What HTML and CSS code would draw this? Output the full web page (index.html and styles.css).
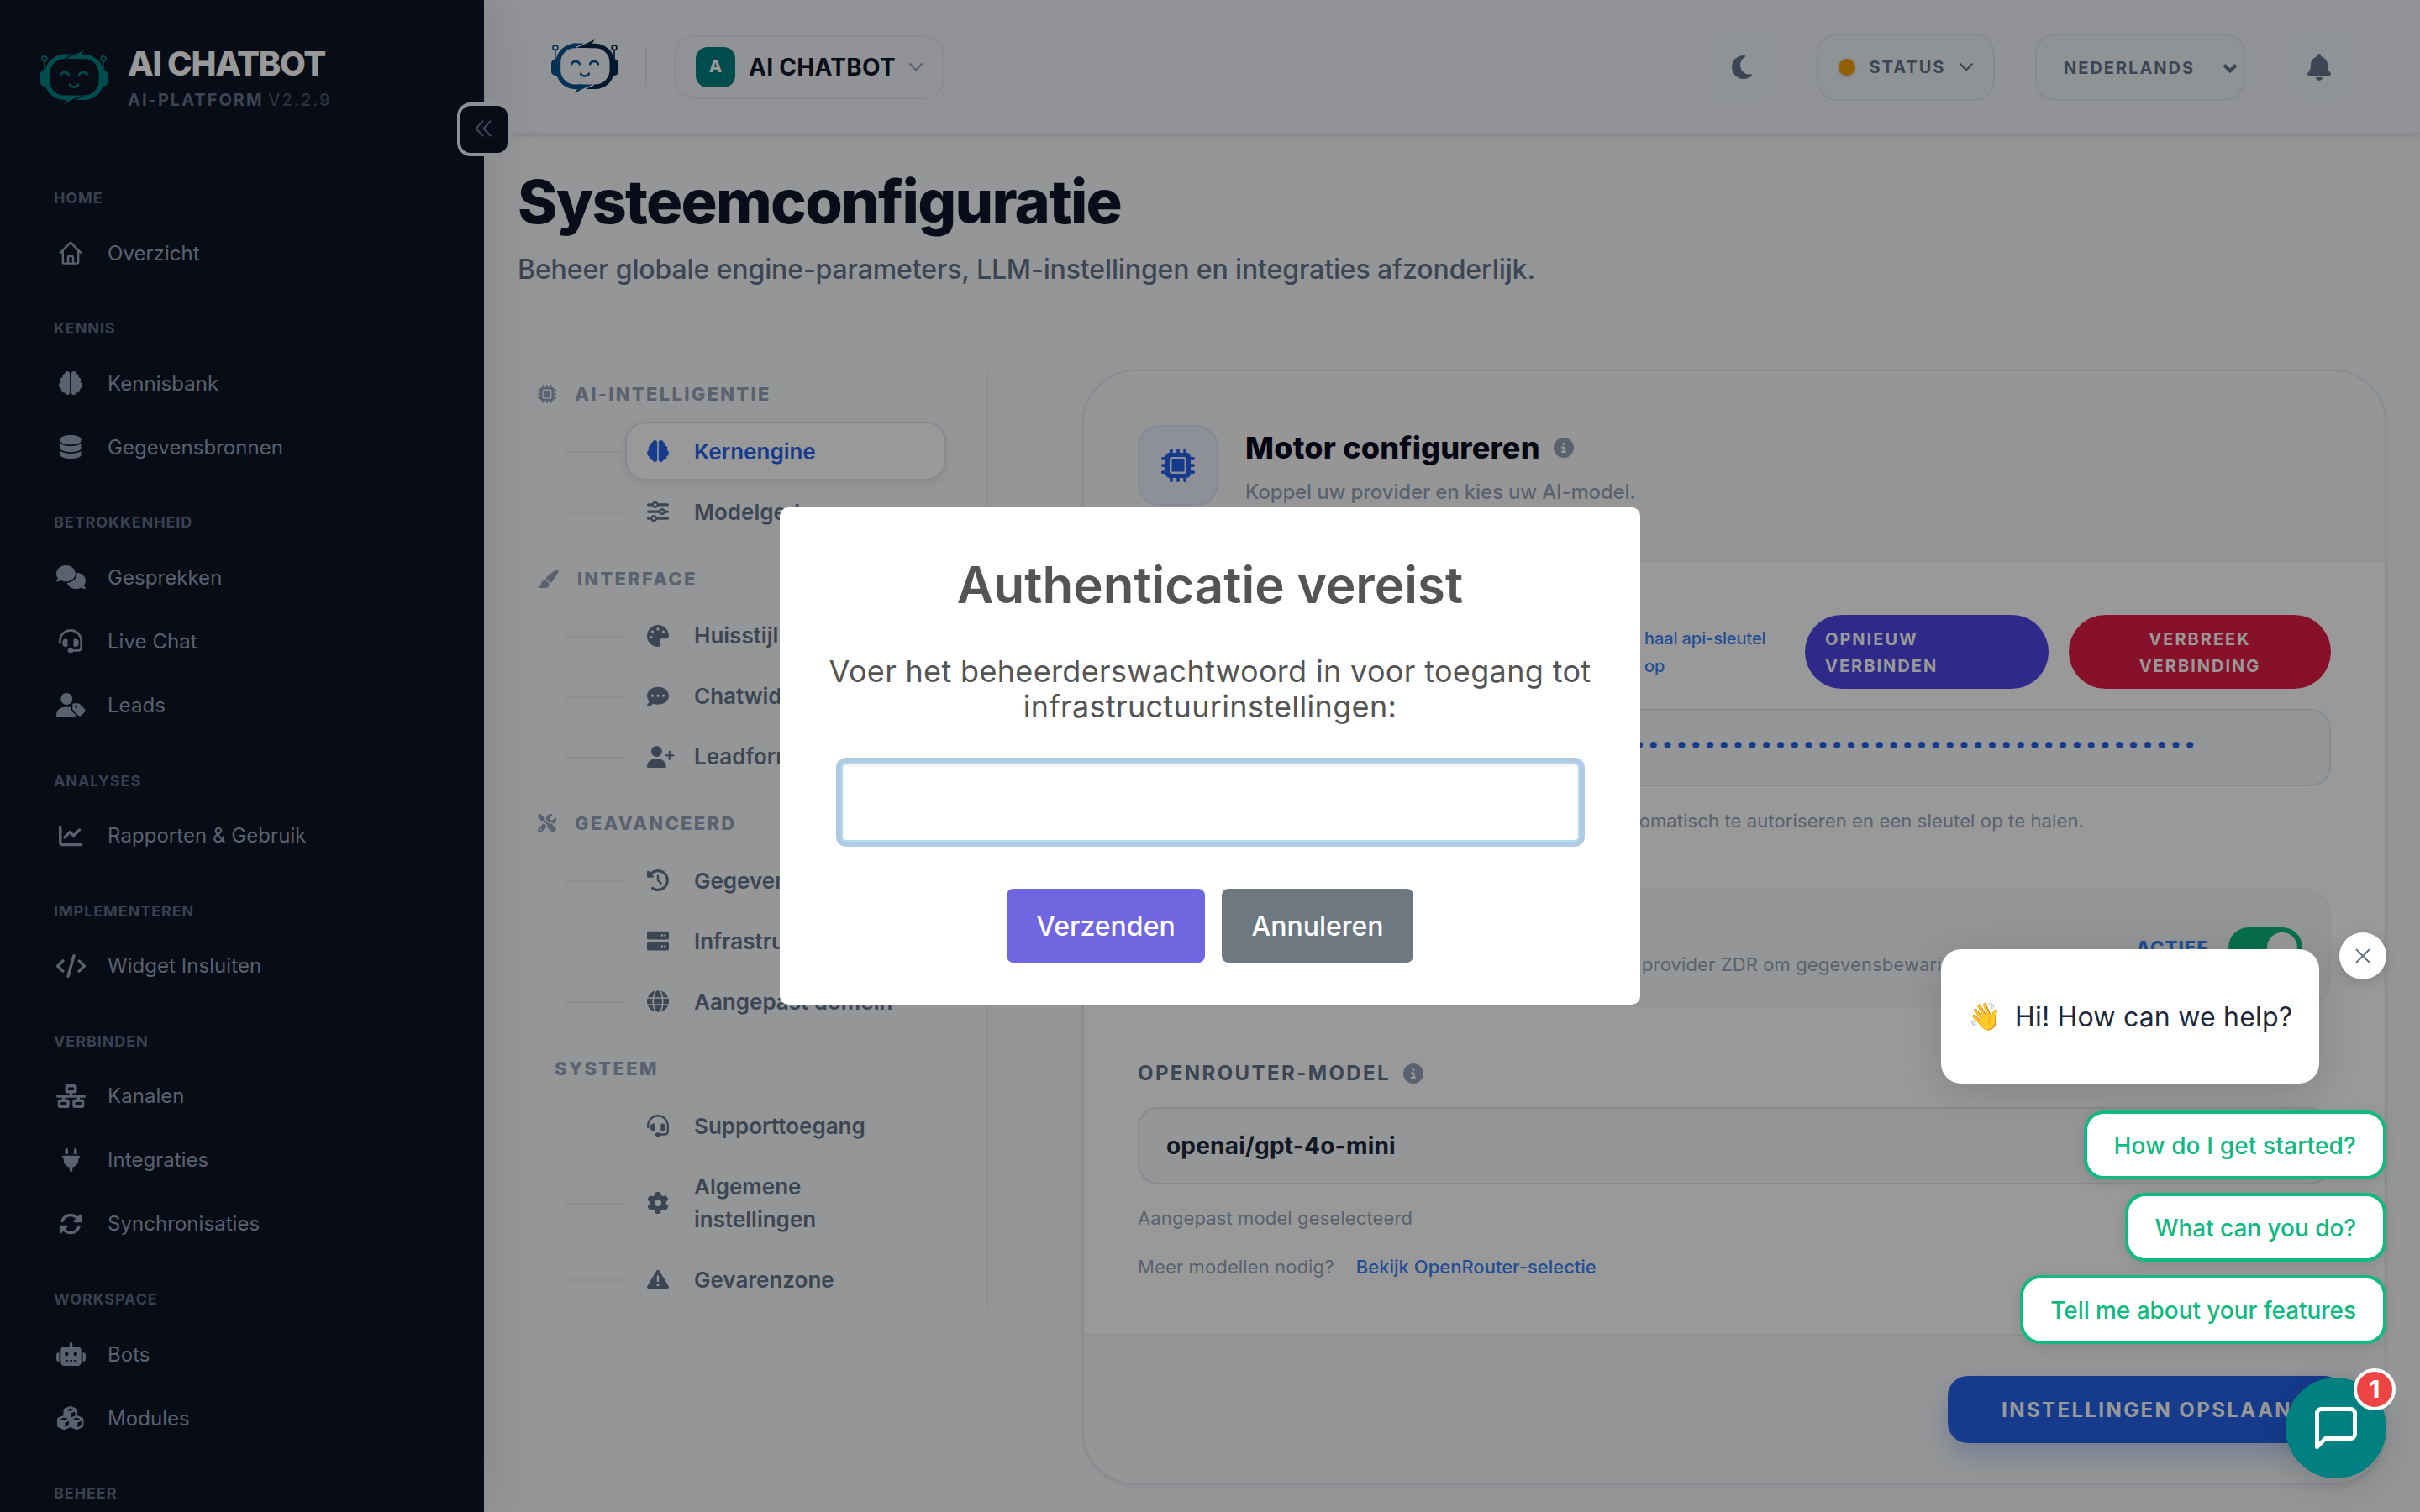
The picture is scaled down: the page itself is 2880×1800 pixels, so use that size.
FILE: index.html
```html
<!DOCTYPE html>
<html lang="nl">
<head>
    <meta charset="UTF-8">
    <meta name="viewport" content="width=device-width, initial-scale=1.0">
    <title>Systeemconfiguratie - AI Chatbot</title>
    <link rel="stylesheet" href="styles.css">
</head>
<body>
    <!-- Shared icons -->
    <svg class="sprite" aria-hidden="true">
        <symbol id="logo" viewBox="0 0 80 64">
            <g class="logo-left">
                <path class="line ring" d="M29 7.4h-.6a20 20 0 0 0-20 20v8.9a20 20 0 0 0 20 20H36"/>
                <path class="fill" d="M28 4.6h11L27 10.1h-2V4.6zM28 64l3.5-6-.5-4.5h19L37 59z"/>
                <path class="fill" d="M5 23.5h4.5V43H5a5 5 0 0 1-5-5v-9.5a5 5 0 0 1 5-5z"/>
                <circle class="line thin" cx="4.9" cy="9.8" r="2.9"/>
                <path class="line thin" d="M4.9 13v11"/>
                <path class="line mid" d="M24 29.5c1.8-4.6 8.2-4.6 10 0M46 29.5c1.8-4.6 8.2-4.6 10 0M35 40.5c1.5 4 8.5 4 10 0"/>
            </g>
            <g class="logo-right">
                <path class="line ring" d="M44 7.4h8.3a20 20 0 0 1 20 20v8.9a20 20 0 0 1-20 20H51"/>
                <path class="fill" d="M52 0l-3.5 4.7.5 5.4H30zM52 59.1H41l12-5.6h2z"/>
                <path class="fill" d="M75 23.5h-4.5V43H75a5 5 0 0 0 5-5v-9.5a5 5 0 0 0-5-5z"/>
                <circle class="line thin" cx="75" cy="9.8" r="2.9"/>
                <path class="line thin" d="M75 13v11"/>
            </g>
        </symbol>
        <symbol id="brain" viewBox="0 0 512 512"><path d="M184 0c30.9 0 56 25.1 56 56V456c0 30.9-25.1 56-56 56c-28.9 0-52.7-21.9-55.7-50.1c-5.2 1.4-10.7 2.1-16.3 2.1c-35.3 0-64-28.7-64-64c0-7.4 1.3-14.6 3.6-21.2C21.4 367.4 0 338.2 0 304c0-31.9 18.7-59.5 45.8-72.3C37.1 220.8 32 207 32 192c0-30.7 21.6-56.3 50.4-62.6C80.8 123.9 80 118 80 112c0-29.9 20.6-55.1 48.3-62.1C131.3 21.9 155.1 0 184 0zM328 0c28.9 0 52.6 21.9 55.7 49.9c27.8 7 48.3 32.1 48.3 62.1c0 6-.8 11.9-2.4 17.4c28.8 6.2 50.4 31.9 50.4 62.6c0 15-5.1 28.8-13.8 39.7C493.3 244.5 512 272.1 512 304c0 34.2-21.4 63.4-51.6 74.8c2.3 6.6 3.6 13.8 3.6 21.2c0 35.3-28.7 64-64 64c-5.6 0-11.1-.7-16.3-2.1c-3 28.2-26.8 50.1-55.7 50.1c-30.9 0-56-25.1-56-56V56c0-30.9 25.1-56 56-56z"/></symbol>
        <symbol id="headset" viewBox="0 0 512 512"><path d="M256 48C141.1 48 48 141.1 48 256v40c0 13.3-10.7 24-24 24s-24-10.7-24-24V256C0 114.6 114.6 0 256 0S512 114.6 512 256V400.1c0 48.6-39.4 88-88.1 88L313.6 488c-8.3 14.3-23.8 24-41.6 24H240c-26.5 0-48-21.5-48-48s21.5-48 48-48h32c17.8 0 33.3 9.7 41.6 24l110.4 .1c22.1 0 40-17.9 40-40V256c0-114.9-93.1-208-208-208zM144 208h16c17.7 0 32 14.3 32 32V352c0 17.7-14.3 32-32 32H144c-35.3 0-64-28.7-64-64V272c0-35.3 28.7-64 64-64zm224 0c35.3 0 64 28.7 64 64v48c0 35.3-28.7 64-64 64H352c-17.7 0-32-14.3-32-32V240c0-17.7 14.3-32 32-32h16z"/></symbol>
        <symbol id="microchip" viewBox="0 0 512 512"><path d="M176 24c0-13.3-10.7-24-24-24s-24 10.7-24 24V64c-35.3 0-64 28.7-64 64H24c-13.3 0-24 10.7-24 24s10.7 24 24 24H64v56H24c-13.3 0-24 10.7-24 24s10.7 24 24 24H64v56H24c-13.3 0-24 10.7-24 24s10.7 24 24 24H64c0 35.3 28.7 64 64 64v40c0 13.3 10.7 24 24 24s24-10.7 24-24V448h56v40c0 13.3 10.7 24 24 24s24-10.7 24-24V448h56v40c0 13.3 10.7 24 24 24s24-10.7 24-24V448c35.3 0 64-28.7 64-64h40c13.3 0 24-10.7 24-24s-10.7-24-24-24H448V280h40c13.3 0 24-10.7 24-24s-10.7-24-24-24H448V176h40c13.3 0 24-10.7 24-24s-10.7-24-24-24H448c0-35.3-28.7-64-64-64V24c0-13.3-10.7-24-24-24s-24 10.7-24 24V64H280V24c0-13.3-10.7-24-24-24s-24 10.7-24 24V64H176V24zM160 128H352c17.7 0 32 14.3 32 32V352c0 17.7-14.3 32-32 32H160c-17.7 0-32-14.3-32-32V160c0-17.7 14.3-32 32-32zm192 32H160V352H352V160z"/></symbol>
        <symbol id="info" viewBox="0 0 512 512"><path d="M256 512A256 256 0 1 0 256 0a256 256 0 1 0 0 512zM216 336h24V272H216c-13.3 0-24-10.7-24-24s10.7-24 24-24h48c13.3 0 24 10.7 24 24v88h8c13.3 0 24 10.7 24 24s-10.7 24-24 24H216c-13.3 0-24-10.7-24-24s10.7-24 24-24zm40-208a32 32 0 1 1 0 64 32 32 0 1 1 0-64z"/></symbol>
        <symbol id="chevron" viewBox="0 0 16 10"><path d="M1.2 1.2 8 8.5l6.8-7.3" fill="none" stroke="currentColor" stroke-linecap="round" stroke-linejoin="round"/></symbol>
    </svg>

    <div class="sidebar" id="sidebar">
        <div class="brand">
            <svg class="logo logo-teal" viewBox="0 0 80 64"><use href="#logo"/></svg>
            <div>
                <div class="brand-name">AI CHATBOT</div>
                <div class="brand-sub">AI-PLATFORM <span>V2.2.9</span></div>
            </div>
        </div>

        <nav class="nav">
            <div class="nav-group">
                <h3>HOME</h3>
                <a class="nav-item"><span class="nav-icon"><svg viewBox="0 0 28 28"><path d="M1.8 13.8 14 1.6l12.2 12.2M4.8 11.2v14.2a1.2 1.2 0 0 0 1.2 1.2h16a1.2 1.2 0 0 0 1.2-1.2V11.2M11 26.5v-6.7a2 2 0 0 1 2-2h2a2 2 0 0 1 2 2v6.7" fill="none" stroke="currentColor" stroke-width="2.4" stroke-linecap="round" stroke-linejoin="round"/></svg></span>Overzicht</a>
            </div>
            <div class="nav-group">
                <h3>KENNIS</h3>
                <a class="nav-item"><span class="nav-icon"><svg viewBox="0 0 512 512"><use href="#brain"/></svg></span>Kennisbank</a>
                <a class="nav-item"><span class="nav-icon"><svg viewBox="0 0 448 512"><path d="M448 80v48c0 44.2-100.3 80-224 80S0 172.2 0 128V80C0 35.8 100.3 0 224 0S448 35.8 448 80zM393.2 214.7c20.8-7.4 39.9-16.9 54.8-28.6V288c0 44.2-100.3 80-224 80S0 332.2 0 288V186.1c14.9 11.8 34 21.2 54.8 28.6C99.7 230.7 159.5 240 224 240s124.3-9.3 169.2-25.3zM0 346.1c14.9 11.8 34 21.2 54.8 28.6C99.7 390.7 159.5 400 224 400s124.3-9.3 169.2-25.3c20.8-7.4 39.9-16.9 54.8-28.6V432c0 44.2-100.3 80-224 80S0 476.2 0 432V346.1z"/></svg></span>Gegevensbronnen</a>
            </div>
            <div class="nav-group">
                <h3>BETROKKENHEID</h3>
                <a class="nav-item"><span class="nav-icon"><svg viewBox="0 0 640 512"><path d="M208 352c114.9 0 208-78.8 208-176S322.9 0 208 0S0 78.8 0 176c0 38.6 14.7 74.3 39.6 103.4c-3.5 9.4-8.7 17.7-14.2 24.7c-4.8 6.2-9.7 11-13.3 14.3c-1.8 1.6-3.3 2.9-4.3 3.7c-.5 .4-.9 .7-1.1 .8l-.2 .2C1 327.2-1.4 334.4 .8 340.9S9.1 352 16 352c21.8 0 43.8-5.6 62.1-12.5c9.2-3.5 17.8-7.4 25.2-11.4C134.1 343.3 169.8 352 208 352zM448 176c0 112.3-99.1 196.9-216.5 207C255.8 457.4 336.4 512 432 512c38.2 0 73.9-8.7 104.7-23.9c7.5 4 16 7.9 25.2 11.4c18.3 6.9 40.3 12.5 62.1 12.5c6.9 0 13.1-4.5 15.2-11.1c2.1-6.6-.2-13.8-5.8-17.9l-.2-.2c-.2-.2-.6-.4-1.1-.8c-1-.8-2.5-2-4.3-3.7c-3.6-3.3-8.5-8.1-13.3-14.3c-5.5-7-10.7-15.4-14.2-24.7c24.9-29 39.6-64.7 39.6-103.4c0-92.8-84.9-168.9-192.6-175.5c.4 5.1 .6 10.3 .6 15.5z"/></svg></span>Gesprekken</a>
                <a class="nav-item"><span class="nav-icon"><svg viewBox="0 0 512 512"><use href="#headset"/></svg></span>Live Chat</a>
                <a class="nav-item"><span class="nav-icon"><svg viewBox="0 0 640 512"><path d="M224 256A128 128 0 1 0 224 0a128 128 0 1 0 0 256zm-45.7 48C79.8 304 0 383.8 0 482.3C0 498.7 13.3 512 29.7 512H418.3c10 0 18.8-4.9 24.2-12.5l-99.2-99.2c-14.9-14.9-23.3-35.1-23.3-56.1v-33c-15.9-4.7-32.8-7.2-50.3-7.2H178.3zM384 224c-17.7 0-32 14.3-32 32v82.7c0 17 6.7 33.3 18.7 45.3L478.1 491.3c18.7 18.7 49.1 18.7 67.9 0l73.4-73.4c18.7-18.7 18.7-49.1 0-67.9L512 242.7c-12-12-28.3-18.7-45.3-18.7H384zm24 80a24 24 0 1 1 48 0 24 24 0 1 1 -48 0z"/></svg></span>Leads</a>
            </div>
            <div class="nav-group">
                <h3>ANALYSES</h3>
                <a class="nav-item"><span class="nav-icon"><svg viewBox="0 0 512 512"><path d="M64 64c0-17.7-14.3-32-32-32S0 46.3 0 64V400c0 44.2 35.8 80 80 80H480c17.7 0 32-14.3 32-32s-14.3-32-32-32H80c-8.8 0-16-7.2-16-16V64zm406.6 86.6c12.5-12.5 12.5-32.8 0-45.3s-32.8-12.5-45.3 0L320 210.7l-57.4-57.4c-12.5-12.5-32.8-12.5-45.3 0l-112 112c-12.5 12.5-12.5 32.8 0 45.3s32.8 12.5 45.3 0L240 221.3l57.4 57.4c12.5 12.5 32.8 12.5 45.3 0l128-128z"/></svg></span>Rapporten &amp; Gebruik</a>
            </div>
            <div class="nav-group">
                <h3>IMPLEMENTEREN</h3>
                <a class="nav-item"><span class="nav-icon"><svg viewBox="0 0 640 512"><path d="M392.8 1.2c-17-4.9-34.7 5-39.6 22l-128 448c-4.9 17 5 34.7 22 39.6s34.7-5 39.6-22l128-448c4.9-17-5-34.7-22-39.6zm80.6 120.1c-12.5 12.5-12.5 32.8 0 45.3L562.7 256l-89.4 89.4c-12.5 12.5-12.5 32.8 0 45.3s32.8 12.5 45.3 0l112-112c12.5-12.5 12.5-32.8 0-45.3l-112-112c-12.5-12.5-32.8-12.5-45.3 0zm-306.7 0c-12.5-12.5-32.8-12.5-45.3 0l-112 112c-12.5 12.5-12.5 32.8 0 45.3l112 112c12.5 12.5 32.8 12.5 45.3 0s12.5-32.8 0-45.3L77.3 256l89.4-89.4c12.5-12.5 12.5-32.8 0-45.3z"/></svg></span>Widget Insluiten</a>
            </div>
            <div class="nav-group">
                <h3>VERBINDEN</h3>
                <a class="nav-item"><span class="nav-icon"><svg viewBox="0 0 640 512"><path d="M256 64H384v64H256V64zM240 0c-26.5 0-48 21.5-48 48v96c0 26.5 21.5 48 48 48h48v32H32c-17.7 0-32 14.3-32 32s14.3 32 32 32h96v32H80c-26.5 0-48 21.5-48 48v96c0 26.5 21.5 48 48 48H240c26.5 0 48-21.5 48-48V368c0-26.5-21.5-48-48-48H192V288H448v32H400c-26.5 0-48 21.5-48 48v96c0 26.5 21.5 48 48 48H560c26.5 0 48-21.5 48-48V368c0-26.5-21.5-48-48-48H512V288h96c17.7 0 32-14.3 32-32s-14.3-32-32-32H352V192h48c26.5 0 48-21.5 48-48V48c0-26.5-21.5-48-48-48H240zM96 448V384H224v64H96zm320-64H544v64H416V384z"/></svg></span>Kanalen</a>
                <a class="nav-item"><span class="nav-icon"><svg viewBox="0 0 384 512"><path d="M96 0C78.3 0 64 14.3 64 32v96h64V32c0-17.7-14.3-32-32-32zM288 0c-17.7 0-32 14.3-32 32v96h64V32c0-17.7-14.3-32-32-32zM32 160c-17.7 0-32 14.3-32 32s14.3 32 32 32v32c0 77.4 55 142 128 156.8V480c0 17.7 14.3 32 32 32s32-14.3 32-32V412.8C297 398 352 333.4 352 256V224c17.7 0 32-14.3 32-32s-14.3-32-32-32H32z"/></svg></span>Integraties</a>
                <a class="nav-item"><span class="nav-icon"><svg viewBox="0 0 512 512"><path d="M142.9 142.9c62.2-62.2 162.7-62.5 225.3-1L327 183c-6.9 6.9-8.9 17.2-5.2 26.2s12.5 14.8 22.2 14.8H472c13.3 0 24-10.7 24-24V72c0-9.7-5.8-18.5-14.8-22.2s-19.3-1.7-26.2 5.2L413.4 96.6c-87.6-86.5-228.7-86.2-315.8 1C73.2 122 55.6 150.7 44.8 181.4c-5.9 16.7 2.9 34.9 19.5 40.8s34.9-2.9 40.8-19.5c7.7-21.8 20.2-42.3 37.8-59.8zM16 312V440c0 9.7 5.8 18.5 14.8 22.2s19.3 1.7 26.2-5.2l41.6-41.6c87.6 86.5 228.7 86.2 315.8-1c24.4-24.4 42.1-53.1 52.9-83.7c5.9-16.7-2.9-34.9-19.5-40.8s-34.9 2.9-40.8 19.5c-7.7 21.8-20.2 42.3-37.8 59.8c-62.2 62.2-162.7 62.5-225.3 1L185 329c6.9-6.9 8.9-17.2 5.2-26.2s-12.5-14.8-22.2-14.8H40c-13.3 0-24 10.7-24 24z"/></svg></span>Synchronisaties</a>
            </div>
            <div class="nav-group">
                <h3>WORKSPACE</h3>
                <a class="nav-item"><span class="nav-icon"><svg viewBox="0 0 640 512"><path d="M320 0c17.7 0 32 14.3 32 32V96H472c39.8 0 72 32.2 72 72V440c0 39.8-32.2 72-72 72H168c-39.8 0-72-32.2-72-72V168c0-39.8 32.2-72 72-72H288V32c0-17.7 14.3-32 32-32zM208 384c-8.8 0-16 7.2-16 16s7.2 16 16 16h32c8.8 0 16-7.2 16-16s-7.2-16-16-16H208zm96 0c-8.8 0-16 7.2-16 16s7.2 16 16 16h32c8.8 0 16-7.2 16-16s-7.2-16-16-16H304zm96 0c-8.8 0-16 7.2-16 16s7.2 16 16 16h32c8.8 0 16-7.2 16-16s-7.2-16-16-16H400zM264 256a40 40 0 1 0 -80 0 40 40 0 1 0 80 0zm152 40a40 40 0 1 0 0-80 40 40 0 1 0 0 80zM48 224H64V416H48c-26.5 0-48-21.5-48-48V272c0-26.5 21.5-48 48-48zm544 0c26.5 0 48 21.5 48 48v96c0 26.5-21.5 48-48 48H576V224h16z"/></svg></span>Bots</a>
                <a class="nav-item"><span class="nav-icon"><svg viewBox="0 0 576 512"><path d="M290.8 48.6l78.4 29.7L288 109.5 206.8 78.3l78.4-29.7c1.8-.7 3.8-.7 5.7 0zM136 92.5V204.7c-1.3 .4-2.6 .8-3.9 1.3l-96 36.4C14.4 250.6 0 271.5 0 294.7V413.9c0 22.2 13.1 42.3 33.5 51.3l96 42.2c14.4 6.3 30.7 6.3 45.1 0L288 457.5l113.5 49.9c14.4 6.3 30.7 6.3 45.1 0l96-42.2c20.3-8.9 33.5-29.1 33.5-51.3V294.7c0-23.3-14.4-44.1-36.1-52.4l-96-36.4c-1.3-.5-2.6-.9-3.9-1.3V92.5c0-23.3-14.4-44.1-36.1-52.4L308 3.7c-12.8-4.8-26.9-4.8-39.7 0l-96 36.4C150.4 48.4 136 69.3 136 92.5zM392 210.6l-82.4 31.2V152.6L392 121v89.6zM154.8 250.9l78.4 29.7L152 311.7 70.8 280.6l78.4-29.7c1.8-.7 3.8-.7 5.7 0zm18.8 204.4V354.8L256 323.2v95.9l-82.4 36.2zM421.2 250.9c1.8-.7 3.8-.7 5.7 0l78.4 29.7L424 311.7l-81.2-31.1 78.4-29.7zM523.2 421.2l-77.6 34.1V354.8L528 323.2v90.7c0 3.2-1.9 6-4.8 7.3z"/></svg></span>Modules</a>
            </div>
            <div class="nav-group">
                <h3>BEHEER</h3>
            </div>
        </nav>

        <button class="collapse" id="sidebarToggle"><svg viewBox="0 0 20 20"><path d="M9.5 1.5 1.5 10l8 8.5M18.5 1.5l-8 8.5 8 8.5" fill="none" stroke="currentColor" stroke-width="2.4" stroke-linecap="round" stroke-linejoin="round"/></svg></button>
    </div>

    <div class="main">
        <header class="topbar">
            <svg class="logo logo-blue" viewBox="0 0 80 64"><use href="#logo"/></svg>
            <span class="divider"></span>
            <div class="bot-select">
                <span class="avatar">A</span>
                <span class="bot-name">AI CHATBOT</span>
                <svg class="chevron muted" viewBox="0 0 16 10"><use href="#chevron"/></svg>
            </div>
            <div class="topbar-right">
                <div class="tool"><svg class="moon" viewBox="0 0 384 512"><path d="M223.5 32C100 32 0 132.3 0 256S100 480 223.5 480c60.6 0 115.5-24.2 155.8-63.4c5-4.9 6.3-12.5 3.1-18.7s-10.1-9.7-17-8.5c-9.8 1.7-19.8 2.6-30.1 2.6c-96.9 0-175.5-78.8-175.5-176c0-65.8 36-123.1 89.3-153.3c6.1-3.5 9.2-10.5 7.7-17.3s-7.3-11.9-14.3-12.5c-6.3-.5-12.6-.8-19-.8z"/></svg></div>
                <div class="tool status"><span class="dot"></span><span class="status-text">STATUS</span><svg class="chevron" viewBox="0 0 16 10"><use href="#chevron"/></svg></div>
                <div class="tool lang">NEDERLANDS<svg class="chevron bold" viewBox="0 0 18 12"><path d="M2 2.5l7 7 7-7" fill="none" stroke="currentColor" stroke-width="4"/></svg></div>
                <div class="tool"><svg class="bell" viewBox="0 0 448 512"><path d="M224 0c-17.7 0-32 14.3-32 32V51.2C119 66 64 130.6 64 208v18.8c0 47-17.3 92.4-48.5 127.6l-7.4 8.3c-8.4 9.4-10.4 22.9-5.3 34.4S19.4 416 32 416H416c12.6 0 24-7.4 29.2-18.9s3.1-25-5.3-34.4l-7.4-8.3C401.3 319.2 384 273.9 384 226.8V208c0-77.4-55-142-128-156.8V32c0-17.7-14.3-32-32-32zm45.3 493.3c12-12 18.7-28.3 18.7-45.3H224 160c0 17 6.7 33.3 18.7 45.3s28.3 18.7 45.3 18.7s33.3-6.7 45.3-18.7z"/></svg></div>
            </div>
        </header>

        <div class="content">
            <h1>Systeemconfiguratie</h1>
            <p class="lead">Beheer globale engine-parameters, LLM-instellingen en integraties afzonderlijk.</p>

            <div class="columns">
                <div class="subnav">
                    <h4><span class="sub-head-icon"><svg viewBox="0 0 512 512"><use href="#microchip"/></svg></span>AI-INTELLIGENTIE</h4>
                    <div class="tree">
                        <a class="sub-item active"><span class="sub-icon"><svg viewBox="0 0 512 512"><use href="#brain"/></svg></span>Kernengine</a>
                        <a class="sub-item"><span class="sub-icon"><svg viewBox="0 0 512 512"><path d="M0 416c0 17.7 14.3 32 32 32l54.7 0c12.3 28.3 40.5 48 73.3 48s61-19.7 73.3-48L480 448c17.7 0 32-14.3 32-32s-14.3-32-32-32l-246.7 0c-12.3-28.3-40.5-48-73.3-48s-61 19.7-73.3 48L32 384c-17.7 0-32 14.3-32 32zm128 0a32 32 0 1 1 64 0 32 32 0 1 1 -64 0zM320 256a32 32 0 1 1 64 0 32 32 0 1 1 -64 0zm32-80c-32.8 0-61 19.7-73.3 48L32 224c-17.7 0-32 14.3-32 32s14.3 32 32 32l246.7 0c12.3 28.3 40.5 48 73.3 48s61-19.7 73.3-48l54.7 0c17.7 0 32-14.3 32-32s-14.3-32-32-32l-54.7 0c-12.3-28.3-40.5-48-73.3-48zM192 128a32 32 0 1 1 0-64 32 32 0 1 1 0 64zm73.3-64C253 35.7 224.8 16 192 16s-61 19.7-73.3 48L32 64C14.3 64 0 78.3 0 96s14.3 32 32 32l86.7 0c12.3 28.3 40.5 48 73.3 48s61-19.7 73.3-48L480 128c17.7 0 32-14.3 32-32s-14.3-32-32-32L265.3 64z"/></svg></span>Modelgedrag</a>
                    </div>
                    <h4><span class="sub-head-icon"><svg viewBox="0 0 576 512"><path d="M339.3 367.1c27.3-3.9 51.9-19.4 67.2-42.9L568.2 74.1c12.6-19.5 9.4-45.3-7.6-61.2S517.7-4.4 499.1 9.6L262.4 187.2c-24 18-38.2 46.1-38.4 76.1L339.3 367.1zm-19.6 25.4l-116-104.4C143.9 290.3 96 339.6 96 400c0 3.9 .2 7.8 .6 11.6C98.4 429.1 86.4 448 68.8 448H64c-17.7 0-32 14.3-32 32s14.3 32 32 32H208c61.9 0 112-50.1 112-112c0-2.5-.1-5-.2-7.5z"/></svg></span>INTERFACE</h4>
                    <div class="tree">
                        <a class="sub-item"><span class="sub-icon"><svg viewBox="0 0 512 512"><path d="M512 256c0 .9 0 1.8 0 2.7c-.4 36.5-33.6 61.3-70.1 61.3H344c-26.5 0-48 21.5-48 48c0 3.4 .4 6.7 1 9.9c2.1 10.2 6.5 20 10.8 29.9c6.1 13.8 12.1 27.5 12.1 42c0 31.8-21.6 60.7-53.4 62c-3.5 .1-7 .2-10.6 .2C114.6 512 0 397.4 0 256S114.6 0 256 0S512 114.6 512 256zM128 288a32 32 0 1 0 -64 0 32 32 0 1 0 64 0zm0-96a32 32 0 1 0 0-64 32 32 0 1 0 0 64zM288 96a32 32 0 1 0 -64 0 32 32 0 1 0 64 0zm96 96a32 32 0 1 0 0-64 32 32 0 1 0 0 64z"/></svg></span>Huisstijl</a>
                        <a class="sub-item"><span class="sub-icon"><svg viewBox="0 0 512 512"><path d="M256 448c141.4 0 256-93.1 256-208S397.4 32 256 32S0 125.1 0 240c0 45.1 17.7 86.8 47.7 120.9c-1.9 24.5-11.4 46.3-21.4 62.9c-5.5 9.2-11.1 16.6-15.2 21.6c-2.1 2.5-3.7 4.4-4.9 5.7c-.6 .6-1 1.1-1.3 1.4l-.3 .3c-4.6 4.6-5.9 11.4-3.4 17.4c2.5 6 8.3 9.9 14.8 9.9c28.7 0 57.6-8.9 81.6-19.3c22.9-10 42.4-21.9 54.3-30.6c31.8 11.5 67 17.9 104.1 17.9zM128 208a32 32 0 1 1 0 64 32 32 0 1 1 0-64zm128 0a32 32 0 1 1 0 64 32 32 0 1 1 0-64zm96 32a32 32 0 1 1 64 0 32 32 0 1 1 -64 0z"/></svg></span>Chatwidget</a>
                        <a class="sub-item"><span class="sub-icon"><svg viewBox="0 0 640 512"><path d="M96 128a128 128 0 1 1 256 0A128 128 0 1 1 96 128zM0 482.3C0 383.8 79.8 304 178.3 304h91.4C368.2 304 448 383.8 448 482.3c0 16.4-13.3 29.7-29.7 29.7H29.7C13.3 512 0 498.7 0 482.3zM504 312V248H440c-13.3 0-24-10.7-24-24s10.7-24 24-24h64V136c0-13.3 10.7-24 24-24s24 10.7 24 24v64h64c13.3 0 24 10.7 24 24s-10.7 24-24 24H552v64c0 13.3-10.7 24-24 24s-24-10.7-24-24z"/></svg></span>Leadformulier</a>
                    </div>
                    <h4><span class="sub-head-icon"><svg viewBox="0 0 512 512"><path d="M78.6 5C69.1-2.4 55.6-1.5 47 7L7 47c-8.5 8.5-9.4 22-2.1 31.6l80 104c4.5 5.9 11.6 9.4 19 9.4h54.1l109 109c-14.7 29-10 65.4 14.3 89.6l112 112c12.5 12.5 32.8 12.5 45.3 0l64-64c12.5-12.5 12.5-32.8 0-45.3l-112-112c-24.2-24.2-60.6-29-89.6-14.3l-109-109V104c0-7.5-3.5-14.5-9.4-19L78.6 5zM19.9 396.1C7.2 408.8 0 426.1 0 444.1C0 481.6 30.4 512 67.9 512c18 0 35.3-7.2 48-19.9L233.7 374.3c-7.8-20.9-9-43.6-3.6-65.1l-61.7-61.7L19.9 396.1zM512 144c0-10.5-1.1-20.7-3.2-30.5c-2.4-11.2-16.1-14.1-24.2-6l-63.9 63.9c-3 3-7.1 4.7-11.3 4.7H352c-8.8 0-16-7.2-16-16V102.6c0-4.2 1.7-8.3 4.7-11.3l63.9-63.9c8.1-8.1 5.2-21.8-6-24.2C388.7 1.1 378.5 0 368 0C288.5 0 224 64.5 224 144l0 .8 85.3 85.3c36-9.1 75.8 .5 104 28.7L429 274.5c49-23 83-72.8 83-130.5zM56 432a24 24 0 1 1 48 0 24 24 0 1 1 -48 0z"/></svg></span>GEAVANCEERD</h4>
                    <div class="tree">
                        <a class="sub-item"><span class="sub-icon"><svg viewBox="0 0 512 512"><path d="M75 75L41 41C25.9 25.9 0 36.6 0 57.9V168c0 13.3 10.7 24 24 24H134.1c21.4 0 32.1-25.9 17-41l-30.8-30.8C155 85.5 203 64 256 64c106 0 192 86 192 192s-86 192-192 192c-40.8 0-78.6-12.7-109.7-34.4c-14.5-10.1-34.4-6.6-44.6 7.9s-6.6 34.4 7.9 44.6C151.2 495 201.7 512 256 512c141.4 0 256-114.6 256-256S397.4 0 256 0C185.3 0 121.3 28.7 75 75zm181 53c-13.3 0-24 10.7-24 24V256c0 6.4 2.5 12.5 7 17l72 72c9.4 9.4 24.6 9.4 33.9 0s9.4-24.6 0-33.9l-65-65V152c0-13.3-10.7-24-24-24z"/></svg></span>Gegevensbeheer</a>
                        <a class="sub-item"><span class="sub-icon"><svg viewBox="0 0 512 512"><path d="M32 32C14.3 32 0 46.3 0 64v128c0 17.7 14.3 32 32 32H480c17.7 0 32-14.3 32-32V64c0-17.7-14.3-32-32-32H32zm320 72a24 24 0 1 1 0 48 24 24 0 1 1 0-48zm40 24a24 24 0 1 1 48 0 24 24 0 1 1 -48 0zM32 288c-17.7 0-32 14.3-32 32v128c0 17.7 14.3 32 32 32H480c17.7 0 32-14.3 32-32V320c0-17.7-14.3-32-32-32H32zm320 72a24 24 0 1 1 0 48 24 24 0 1 1 0-48zm40 24a24 24 0 1 1 48 0 24 24 0 1 1 -48 0z"/></svg></span>Infrastructuur</a>
                        <a class="sub-item"><span class="sub-icon"><svg viewBox="0 0 512 512"><path d="M352 256c0 22.2-1.2 43.6-3.3 64H163.3c-2.2-20.4-3.3-41.8-3.3-64s1.2-43.6 3.3-64H348.7c2.2 20.4 3.3 41.8 3.3 64zm28.8-64H503.9c5.3 20.5 8.1 41.9 8.1 64s-2.8 43.5-8.1 64H380.8c2.1-20.6 3.2-42 3.2-64s-1.1-43.4-3.2-64zm112.6-32H376.7c-10-63.9-29.8-117.4-55.3-151.6c78.3 20.7 142 77.5 171.9 151.6zm-149.1 0H167.7c6.1-36.4 15.5-68.6 27-94.7c10.5-23.6 22.2-40.7 33.5-51.5C239.4 3.2 248.7 0 256 0s16.6 3.2 27.8 13.8c11.3 10.8 23 27.9 33.5 51.5c11.6 26 20.9 58.2 27 94.7zm-209 0H18.6C48.6 85.9 112.2 29.1 190.6 8.4C165.1 42.6 145.3 96.1 135.3 160zM8.1 192H131.2c-2.1 20.6-3.2 42-3.2 64s1.1 43.4 3.2 64H8.1C2.8 299.5 0 278.1 0 256s2.8-43.5 8.1-64zM194.7 446.6c-11.6-26-20.9-58.2-27-94.6H344.3c-6.1 36.4-15.5 68.6-27 94.6c-10.5 23.6-22.2 40.7-33.5 51.5C272.6 508.8 263.3 512 256 512s-16.6-3.2-27.8-13.8c-11.3-10.8-23-27.9-33.5-51.5zM135.3 352c10 63.9 29.8 117.4 55.3 151.6C112.2 482.9 48.6 426.1 18.6 352H135.3zm358.1 0c-30 74.1-93.6 130.9-171.9 151.6c25.5-34.2 45.2-87.7 55.3-151.6H493.4z"/></svg></span>Aangepast domein</a>
                    </div>
                    <h4 class="no-icon">SYSTEEM</h4>
                    <div class="tree">
                        <a class="sub-item"><span class="sub-icon"><svg viewBox="0 0 512 512"><use href="#headset"/></svg></span>Supporttoegang</a>
                        <a class="sub-item"><span class="sub-icon"><svg viewBox="0 0 512 512"><path d="M495.9 166.6c3.2 8.7 .5 18.4-6.4 24.6l-43.3 39.4c1.1 8.3 1.7 16.8 1.7 25.4s-.6 17.1-1.7 25.4l43.3 39.4c6.9 6.2 9.6 15.9 6.4 24.6c-4.4 11.9-9.7 23.3-15.8 34.3l-4.7 8.1c-6.6 11-14 21.4-22.1 31.2c-5.9 7.2-15.7 9.6-24.5 6.8l-55.7-17.7c-13.4 10.3-28.2 18.9-44 25.4l-12.5 57.1c-2 9.1-9 16.3-18.2 17.8c-13.8 2.3-28 3.5-42.5 3.5s-28.7-1.2-42.5-3.5c-9.2-1.5-16.2-8.7-18.2-17.8l-12.5-57.1c-15.8-6.5-30.6-15.1-44-25.4L83.1 425.9c-8.8 2.8-18.6 .3-24.5-6.8c-8.1-9.8-15.5-20.2-22.1-31.2l-4.7-8.1c-6.1-11-11.4-22.4-15.8-34.3c-3.2-8.7-.5-18.4 6.4-24.6l43.3-39.4C64.6 273.1 64 264.6 64 256s.6-17.1 1.7-25.4L22.4 191.2c-6.9-6.2-9.6-15.9-6.4-24.6c4.4-11.9 9.7-23.3 15.8-34.3l4.7-8.1c6.6-11 14-21.4 22.1-31.2c5.9-7.2 15.7-9.6 24.5-6.8l55.7 17.7c13.4-10.3 28.2-18.9 44-25.4l12.5-57.1c2-9.1 9-16.3 18.2-17.8C227.3 1.2 241.5 0 256 0s28.7 1.2 42.5 3.5c9.2 1.5 16.2 8.7 18.2 17.8l12.5 57.1c15.8 6.5 30.6 15.1 44 25.4l55.7-17.7c8.8-2.8 18.6-.3 24.5 6.8c8.1 9.8 15.5 20.2 22.1 31.2l4.7 8.1c6.1 11 11.4 22.4 15.8 34.3zM256 336a80 80 0 1 0 0-160 80 80 0 1 0 0 160z"/></svg></span>Algemene instellingen</a>
                        <a class="sub-item"><span class="sub-icon"><svg viewBox="0 0 512 512"><path d="M256 32c14.2 0 27.3 7.5 34.5 19.8l216 368c7.3 12.4 7.3 27.7 .2 40.1S486.3 480 472 480H40c-14.3 0-27.6-7.7-34.7-20.1s-7-27.8 .2-40.1l216-368C228.7 39.5 241.8 32 256 32zm0 128c-13.3 0-24 10.7-24 24V296c0 13.3 10.7 24 24 24s24-10.7 24-24V184c0-13.3-10.7-24-24-24zm32 224a32 32 0 1 0 -64 0 32 32 0 1 0 64 0z"/></svg></span>Gevarenzone</a>
                    </div>
                </div>

                <div class="card">
                    <div class="card-head">
                        <div class="card-icon"><svg viewBox="0 0 512 512"><use href="#microchip"/></svg></div>
                        <div>
                            <h2>Motor configureren <svg class="info" viewBox="0 0 512 512"><use href="#info"/></svg></h2>
                            <p>Koppel uw provider en kies uw AI-model.</p>
                        </div>
                    </div>

                    <div class="card-body">
                        <div class="key-row">
                            <span class="label">API-SLEUTEL</span>
                            <a class="key-link">haal api-sleutel op</a>
                            <button class="pill indigo">OPNIEUW VERBINDEN</button>
                            <button class="pill red">VERBREEK VERBINDING</button>
                        </div>
                        <div class="field secret">&bull;&bull;&bull;&bull;&bull;&bull;&bull;&bull;&bull;&bull;&bull;&bull;&bull;&bull;&bull;&bull;&bull;&bull;&bull;&bull;&bull;&bull;&bull;&bull;&bull;&bull;&bull;&bull;&bull;&bull;&bull;&bull;&bull;&bull;&bull;&bull;&bull;&bull;&bull;&bull;&bull;&bull;&bull;&bull;&bull;&bull;&bull;&bull;&bull;&bull;&bull;&bull;&bull;&bull;&bull;&bull;&bull;&bull;&bull;&bull;&bull;&bull;&bull;&bull;&bull;&bull;&bull;&bull;&bull;&bull;&bull;&bull;&bull;</div>
                        <p class="hint key-hint">Klik op verbinden om automatisch te autoriseren en een sleutel op te halen.</p>

                        <div class="zdr">
                            <p class="hint zdr-text">provider ZDR om gegevensbewaring uit te sluiten</p>
                            <span class="zdr-state">ACTIEF</span>
                            <span class="switch"><i></i></span>
                        </div>

                        <div class="label model-label">OPENROUTER-MODEL <svg class="info" viewBox="0 0 512 512"><use href="#info"/></svg></div>
                        <div class="field">openai/gpt-4o-mini</div>
                        <p class="hint model-hint">Aangepast model geselecteerd</p>
                        <p class="hint more-hint">Meer modellen nodig? <a>Bekijk OpenRouter-selectie</a></p>
                    </div>

                    <div class="card-foot">
                        <button class="save">INSTELLINGEN OPSLAAN</button>
                    </div>
                </div>
            </div>
        </div>
    </div>

    <!-- Password prompt -->
    <div class="overlay">
        <div class="modal">
            <h2>Authenticatie vereist</h2>
            <p>Voer het beheerderswachtwoord in voor toegang tot infrastructuurinstellingen:</p>
            <input type="password" class="modal-input">
            <div class="modal-actions">
                <button class="confirm">Verzenden</button>
                <button class="cancel">Annuleren</button>
            </div>
        </div>
    </div>

    <!-- Chat widget -->
    <div class="chat">
        <div class="chat-top">
            <div class="chat-bubble"><span class="wave">👋</span>Hi! How can we help?</div>
            <button class="chat-close"><svg viewBox="0 0 18 18"><path d="M1.5 1.5l15 15M16.5 1.5l-15 15" fill="none" stroke="currentColor" stroke-width="2" stroke-linecap="round"/></svg></button>
        </div>
        <button class="reply reply-start">How do I get started?</button>
        <button class="reply">What can you do?</button>
        <button class="reply">Tell me about your features</button>
        <button class="launcher">
            <svg viewBox="0 0 24 24"><path d="M21 15a2 2 0 0 1-2 2H7l-4 4V5a2 2 0 0 1 2-2h14a2 2 0 0 1 2 2z" fill="none" stroke="currentColor" stroke-width="2" stroke-linecap="round" stroke-linejoin="round"/></svg>
            <span class="badge">1</span>
        </button>
    </div>
</body>
</html>
```

FILE: styles.css
```css
* {
    box-sizing: border-box;
}

body {
    margin: 0;
    width: 2880px;
    height: 1800px;
    display: flex;
    overflow: hidden;
    background-color: #f8fafc;
    color: #0f172a;
    font-family: Inter, "Liberation Sans", sans-serif;
}

h1, h2, h3, h4, p {
    margin: 0;
}

button {
    font-family: inherit;
    border: none;
    margin: 0;
    cursor: pointer;
}

svg {
    display: block;
    fill: currentColor;
    flex-shrink: 0;
    overflow: visible;
}

.sprite {
    position: absolute;
    width: 0;
    height: 0;
}

/* Logo */
.logo {
    width: 80px;
    height: 64px;
    --left: #008080;
    --right: #008080;
}

.logo-blue {
    --left: #08528f;
    --right: #03294c;
}

.logo-left { color: var(--left); }
.logo-right { color: var(--right); }
.line { fill: none; stroke: currentColor; stroke-linecap: round; }
.ring { stroke-width: 5.5; stroke-linecap: butt; }
.thin { stroke-width: 1.7; }
.mid { stroke-width: 2.4; }

/* Sidebar */
.sidebar {
    position: relative;
    z-index: 2;
    width: 576px;
    height: 1800px;
    flex-shrink: 0;
    background-color: #0c1425;
    box-shadow: 8px 0 60px rgba(15, 23, 42, 0.1);
}

.brand {
    display: flex;
    gap: 24px;
    padding: 52px 0 0 48px;
    height: 226px;
}

.brand .logo {
    margin-top: 8px;
}

.brand-name {
    color: #fff;
    font-size: 40px;
    line-height: 48px;
    font-weight: 800;
    letter-spacing: -1.3px;
}

.brand-sub {
    margin-top: 7px;
    color: #64748b;
    font-size: 20px;
    line-height: 24px;
    font-weight: 700;
    letter-spacing: 2px;
    white-space: nowrap;
}

.brand-sub span {
    color: #475569;
    font-weight: 500;
    margin-left: -1px;
}

.nav {
    height: 1574px;
    overflow: hidden;
}

.nav-group {
    padding-left: 64px;
    margin-bottom: 44.2px;
}

.nav-group h3 {
    margin-bottom: 19px;
    color: #5f6f86;
    font-size: 18px;
    line-height: 20px;
    font-weight: 700;
    letter-spacing: 0.9px;
}

.nav-item {
    display: flex;
    align-items: center;
    gap: 24px;
    height: 72px;
    margin-bottom: 4px;
    color: #94a3b8;
    font-size: 24px;
    letter-spacing: 0.05px;
}

.nav-item:last-child {
    margin-bottom: 0;
}

.nav-icon {
    display: flex;
    justify-content: center;
    width: 40px;
}

.nav-icon svg {
    height: 28px;
}

.collapse {
    position: absolute;
    top: 122px;
    right: -32px;
    width: 64px;
    height: 64px;
    padding: 0 2px 2px 0;
    display: flex;
    align-items: center;
    justify-content: center;
    background-color: #0c1425;
    border: 4px solid #eef0f5;
    border-radius: 16px;
    color: #64748b;
}

.collapse svg {
    width: 20px;
}

/* Top bar */
.main {
    width: 2304px;
}

.topbar {
    display: flex;
    align-items: center;
    gap: 32px;
    height: 160px;
    padding: 0 80px;
    background-color: #f3f5fa;
    border-bottom: 2px solid #e2e8f0;
    box-shadow: 0 2px 6px rgba(15, 23, 42, 0.12);
}

.divider {
    width: 2px;
    height: 48px;
    background-color: #e2e8f0;
}

.bot-select {
    display: flex;
    align-items: center;
    gap: 16px;
    width: 322px;
    height: 76px;
    margin-top: 2px;
    padding: 0 24px;
    border: 2px solid #e8ebf0;
    border-radius: 24px;
}

.avatar {
    width: 48px;
    height: 48px;
    border-radius: 14px;
    background-color: #008080;
    color: #fff;
    font-size: 20px;
    line-height: 47px;
    font-weight: 800;
    text-align: center;
}

.bot-name {
    flex: 1;
    font-size: 28px;
    font-weight: 700;
    letter-spacing: 0.3px;
    white-space: nowrap;
}

.chevron {
    width: 16px;
    stroke-width: 2.2;
}

.chevron.muted {
    color: #94a3b8;
}

.chevron.bold {
    width: 18px;
}

.topbar-right {
    display: flex;
    gap: 48px;
    margin: 2px 0 0 auto;
}

.tool {
    display: flex;
    align-items: center;
    justify-content: center;
    width: 80px;
    height: 80px;
    border-radius: 24px;
    background-color: #eff5f8;
    color: #64748b;
    font-size: 20px;
    font-weight: 700;
    letter-spacing: 2px;
}

.status, .lang {
    justify-content: space-between;
    border: 2px solid #e2e8f0;
}

.status {
    width: 212px;
    padding: 0 24px;
}

.lang {
    width: 250px;
    padding: 2px 7px 0 32px;
}

.dot {
    width: 20px;
    height: 20px;
    border-radius: 50%;
    background-color: #f59e0b;
    box-shadow: 0 2px 4px rgba(0, 0, 0, 0.15);
}

.moon {
    height: 32px;
    margin-right: 2px;
}

.bell {
    height: 32px;
}

/* Page */
.content {
    padding: 40px 40px 0;
}

h1 {
    font-size: 72px;
    line-height: 80px;
    font-weight: 800;
    letter-spacing: -1.75px;
}

.lead {
    margin-top: 17px;
    color: #64748b;
    font-size: 32px;
    line-height: 48px;
    font-weight: 500;
    letter-spacing: -0.12px;
}

.columns {
    display: flex;
    gap: 112px;
    margin-top: 95px;
}

/* Settings navigation */
.subnav {
    width: 560px;
    height: 1120px;
    padding-left: 24px;
    border-right: 2px solid #eef1f5;
}

.subnav h4 {
    display: flex;
    align-items: center;
    gap: 20px;
    height: 58px;
    margin-bottom: 4px;
    color: #94a3b8;
    font-size: 22px;
    font-weight: 800;
    letter-spacing: 2.25px;
}

.subnav h4.no-icon {
    padding-left: 20px;
}

.sub-head-icon {
    padding-right: 2px;
}

.sub-head-icon svg {
    height: 22px;
}

.tree {
    position: relative;
    margin: 0 48px 15.7px 32px;
    padding-left: 72px;
}

/* Trunk of the tree */
.tree::before {
    content: "";
    position: absolute;
    left: 0;
    top: 18px;
    bottom: 16px;
    width: 2px;
    background-color: #edf0f4;
}

.sub-item {
    position: relative;
    display: flex;
    align-items: center;
    min-height: 70px;
    margin-bottom: 2px;
    padding: 13.5px 24px;
    border: 2px solid transparent;
    border-radius: 24px;
    color: #64748b;
    font-size: 26px;
    line-height: 39px;
    font-weight: 600;
}

/* Branch to each item */
.sub-item::before {
    content: "";
    position: absolute;
    left: -74px;
    top: 50%;
    width: 74px;
    height: 2px;
    background-color: #edf0f4;
}

.sub-item.active {
    background-color: #fff;
    border-color: #e2e8f0;
    box-shadow: 0 4px 10px rgba(15, 23, 42, 0.08);
    color: #2563eb;
}

.sub-icon {
    flex: 0 0 56px;
}

.sub-icon svg {
    height: 26px;
}

/* Card */
.card {
    width: 1552px;
    height: 1328px;
    border: 2px solid #e2e8f0;
    border-radius: 64px;
    background-color: #fff;
    overflow: hidden;
    box-shadow: 0 2px 6px rgba(15, 23, 42, 0.06);
}

.card-head {
    display: flex;
    gap: 32px;
    height: 226px;
    padding: 64px 64px 0;
    background-color: #fafbfc;
    border-bottom: 2px solid #f1f5f9;
}

.card-icon {
    display: flex;
    align-items: center;
    justify-content: center;
    width: 96px;
    height: 96px;
    border: 2px solid #dbe5fb;
    border-radius: 26px;
    background-color: #edf1fd;
    color: #2563eb;
}

.card-icon svg {
    width: 40px;
}

.card-head h2 {
    display: flex;
    align-items: center;
    gap: 16px;
    margin-top: 3px;
    color: #050a1e;
    font-size: 36px;
    line-height: 48px;
    font-weight: 800;
    letter-spacing: 0.2px;
}

.card-head p {
    margin-top: 11px;
    color: #94a3b8;
    font-size: 24px;
    line-height: 36px;
    font-weight: 500;
    letter-spacing: -0.15px;
}

.info {
    width: 24px;
    color: #94a3b8;
}

.card-body {
    height: 920px;
    padding: 64px 64px 0;
}

.label {
    display: flex;
    align-items: center;
    color: #64748b;
    font-size: 24px;
    line-height: 36px;
    font-weight: 700;
    letter-spacing: 2.4px;
}

.key-row {
    display: flex;
    align-items: center;
    height: 88px;
    margin-bottom: 24px;
}

.key-link {
    width: 167px;
    margin: 2px 24px 0 auto;
    color: #3b82f6;
    font-size: 20px;
    line-height: 33px;
    font-weight: 500;
    letter-spacing: -0.1px;
}

.pill {
    height: 88px;
    padding: 2px 24px 0;
    border-radius: 44px;
    color: #fff;
    font-size: 20px;
    line-height: 32px;
    font-weight: 700;
    letter-spacing: 2px;
}

.indigo {
    width: 290px;
    padding-right: 100px;
    background-color: #4f46e5;
    text-align: left;
}

.red {
    width: 312px;
    margin-left: 24px;
    padding: 2px 60px 0;
    background-color: #e11d48;
}

.field {
    height: 92px;
    padding: 0 32px;
    border: 2px solid #e2e8f0;
    border-radius: 24px;
    background-color: #f8fafc;
    color: #1e293b;
    font-size: 28px;
    line-height: 88px;
    font-weight: 700;
    letter-spacing: 0.2px;
}

.secret {
    color: #2563eb;
    font-family: "Liberation Mono", monospace;
    letter-spacing: 0;
    line-height: 86px;
}

.hint {
    color: #94a3b8;
    font-size: 22px;
    line-height: 36px;
    letter-spacing: 0.12px;
    white-space: nowrap;
}

.hint a {
    margin-left: 20px;
    color: #3b82f6;
    font-weight: 500;
    letter-spacing: 0;
}

.key-hint {
    width: 1126px;
    margin-top: 23px;
    text-align: right;
}

.zdr {
    display: flex;
    height: 140px;
    margin-top: 63px;
    padding: 44px 32px 0 598px;
    border: 2px solid #f1f5f9;
    border-radius: 32px;
    background-color: #f8fafc;
}

.zdr-text {
    width: 588px;
    padding-top: 26px;
}

.zdr-state {
    width: 110px;
    height: 48px;
    color: #3b82f6;
    font-size: 22px;
    line-height: 48px;
    font-weight: 800;
    letter-spacing: 1.1px;
}

.switch {
    width: 88px;
    height: 48px;
    padding: 6px;
    border-radius: 24px;
    background-color: #10b981;
}

.switch i {
    display: block;
    width: 36px;
    height: 36px;
    margin-left: 40px;
    border-radius: 50%;
    background-color: #fff;
}

.model-label {
    gap: 15px;
    margin: 62px 0 22px;
}

.model-hint {
    margin-top: 22px;
}

.more-hint {
    margin-top: 22px;
}

.card-foot {
    display: flex;
    justify-content: flex-end;
    height: 178px;
    padding: 48px 48px 0;
    border-top: 2px solid #f1f5f9;
    background-color: #f8fafc;
}

.save {
    width: 472px;
    height: 80px;
    padding: 0 0 0 2px;
    border-radius: 24px;
    background-color: #2563eb;
    box-shadow: 0 16px 30px rgba(37, 99, 235, 0.25);
    color: #fff;
    font-size: 24px;
    font-weight: 700;
    letter-spacing: 2.4px;
}

/* Modal */
.overlay {
    position: absolute;
    z-index: 10;
    inset: 0;
    display: flex;
    align-items: center;
    justify-content: center;
    background-color: rgba(0, 0, 0, 0.4);
}

.modal {
    display: flex;
    flex-direction: column;
    align-items: center;
    width: 1024px;
    height: 592px;
    padding-top: 56px;
    border-radius: 10px;
    background-color: #fff;
    color: #545454;
    text-align: center;
}

.modal h2 {
    font-size: 60px;
    line-height: 72px;
    font-weight: 600;
}

.modal p {
    margin-top: 46px;
    padding: 0 40px;
    font-size: 36px;
    line-height: 42px;
    letter-spacing: 0.34px;
}

.modal-input {
    width: 879px;
    height: 94px;
    margin-top: 46px;
    border: 2px solid #b4dbed;
    border-radius: 6px;
    outline: none;
    background-color: #fff;
    box-shadow: inset 0 2px 2px rgba(0, 0, 0, 0.06), 0 0 0 6px #b1cae3;
}

.modal-actions {
    display: flex;
    gap: 20px;
    margin-top: 56px;
}

.modal-actions button {
    height: 88px;
    padding: 0;
    border-radius: 8px;
    color: #fff;
    font-size: 32px;
    font-weight: 500;
}

.confirm {
    width: 236px;
    background-color: #7066e0;
}

.cancel {
    width: 228px;
    background-color: #6e7881;
}

/* Chat widget */
.chat {
    position: absolute;
    z-index: 20;
    right: 40px;
    bottom: 40px;
    display: flex;
    flex-direction: column;
    align-items: flex-end;
    gap: 16px;
}

.chat-top {
    display: flex;
    align-items: flex-start;
    gap: 24px;
    margin-bottom: 16px;
}

.chat-bubble {
    display: flex;
    align-items: center;
    width: 450px;
    height: 160px;
    margin-top: 20px;
    padding-left: 32px;
    border-radius: 24px;
    background-color: #fff;
    box-shadow: 0 8px 48px rgba(0, 0, 0, 0.15);
    color: #1e293b;
    font-size: 32px;
    letter-spacing: 0.2px;
    white-space: nowrap;
}

.wave {
    width: 56px;
    font-family: "Noto Color Emoji", sans-serif;
    font-size: 32px;
}

.chat-close {
    display: flex;
    align-items: center;
    justify-content: center;
    width: 56px;
    height: 56px;
    padding: 0;
    border-radius: 50%;
    background-color: #fff;
    box-shadow: 0 4px 16px rgba(0, 0, 0, 0.15);
    color: #64748b;
}

.chat-close svg {
    width: 18px;
}

.reply {
    height: 82px;
    padding: 2px 32px 0;
    border: 4px solid #10b981;
    border-radius: 24px;
    background-color: #fff;
    box-shadow: 0 4px 16px rgba(0, 0, 0, 0.1);
    color: #10b981;
    font-size: 28px;
    font-weight: 500;
    letter-spacing: -0.05px;
}

.reply-start {
    letter-spacing: 0.15px;
}

.launcher {
    position: relative;
    display: flex;
    align-items: center;
    justify-content: center;
    width: 120px;
    height: 120px;
    margin-top: 24px;
    padding: 0;
    border-radius: 50%;
    background-color: #008080;
    box-shadow: 0 8px 40px rgba(0, 0, 0, 0.15);
    color: #fff;
}

.launcher svg {
    width: 60px;
}

.badge {
    position: absolute;
    top: -11px;
    right: -11px;
    width: 50px;
    height: 50px;
    border: 4px solid #fff;
    border-radius: 50%;
    background-color: #ef4444;
    font-size: 28px;
    line-height: 42px;
    font-weight: 800;
}
```
